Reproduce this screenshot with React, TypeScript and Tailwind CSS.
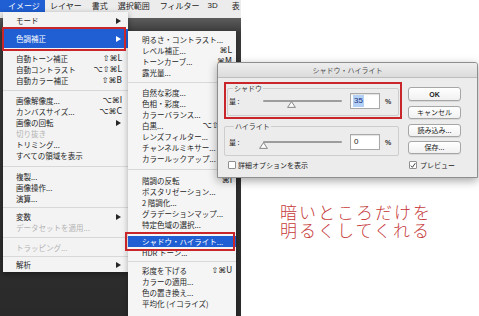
import React from "react";

type R = {
  t?: "sp" | "sep";
  c?: string;
  label?: string;
  sc?: string;
  arrow?: boolean;
  disabled?: boolean;
  active?: boolean;
};

const mainMenu: R[] = [
  { t: "sp", c: "h-[3px]" },
  { label: "モード", arrow: true },
  { t: "sp", c: "h-[3px]" },
  { label: "色調補正", arrow: true, active: true, c: "h-[19px]" },
  { t: "sp", c: "h-[5px]" },
  { label: "自動トーン補正", sc: "⇧⌘L" },
  { label: "自動コントラスト", sc: "⌥⇧⌘L" },
  { label: "自動カラー補正", sc: "⇧⌘B" },
  { t: "sep", c: "h-[9px]" },
  { label: "画像解像度...", sc: "⌥⌘I" },
  { label: "カンバスサイズ...", sc: "⌥⌘C" },
  { label: "画像の回転", arrow: true },
  { label: "切り抜き", disabled: true },
  { label: "トリミング..." },
  { label: "すべての領域を表示" },
  { t: "sep", c: "h-[10px]" },
  { label: "複製..." },
  { label: "画像操作..." },
  { label: "演算..." },
  { t: "sep", c: "h-[7px]" },
  { label: "変数", arrow: true },
  { label: "データセットを適用...", disabled: true },
  { t: "sep", c: "h-[9px]" },
  { label: "トラッピング...", disabled: true },
  { t: "sep", c: "h-[6px]" },
  { label: "解析", arrow: true },
];

const subMenu: R[] = [
  { t: "sp", c: "h-[3px]" },
  { label: "明るさ・コントラスト..." },
  { label: "レベル補正...", sc: "⌘L" },
  { label: "トーンカーブ...", sc: "⌘M" },
  { label: "露光量..." },
  { t: "sep", c: "h-[9px]" },
  { label: "自然な彩度..." },
  { label: "色相・彩度...", sc: "⌘U" },
  { label: "カラーバランス...", sc: "⌘B" },
  { label: "白黒...", sc: "⌥⇧⌘B" },
  { label: "レンズフィルター..." },
  { label: "チャンネルミキサー..." },
  { label: "カラールックアップ..." },
  { t: "sep", c: "h-[11px]" },
  { label: "階調の反転", sc: "⌘I" },
  { label: "ポスタリゼーション..." },
  { label: "2 階調化..." },
  { label: "グラデーションマップ..." },
  { label: "特定色域の選択..." },
  { t: "sep", c: "h-[6px]" },
  { label: "シャドウ・ハイライト...", active: true },
  { label: "HDR トーン..." },
  { t: "sep", c: "h-[7px]" },
  { label: "彩度を下げる", sc: "⇧⌘U" },
  { label: "カラーの適用..." },
  { label: "色の置き換え..." },
  { label: "平均化 (イコライズ)" },
];

function Arrow() {
  return (
    <svg width="5" height="6" viewBox="0 0 5 6" className="mr-[1px]">
      <path d="M0 0 L5 3 L0 6 Z" fill="currentColor" />
    </svg>
  );
}

function Row({ r, side }: { r: R; side: "main" | "sub" }) {
  if (r.t === "sp") return <div className={r.c} />;
  if (r.t === "sep")
    return (
      <div className={`${r.c} flex items-center`}>
        <div className="h-px w-full bg-[#d8d8d8]" />
      </div>
    );
  return (
    <div
      className={`${r.c ?? "h-[11px]"} flex items-center ${
        side === "main" ? "pl-[13px] pr-[6px]" : "pl-[14px] pr-[4px]"
      } ${
        r.active
          ? "bg-[#1f5fd3] text-white"
          : r.disabled
          ? "text-[#b4b4b4]"
          : "text-[#262626]"
      }`}
    >
      <span className="flex-1 whitespace-nowrap">{r.label}</span>
      {r.sc && (
        <span className="whitespace-nowrap font-['DejaVu_Sans','Noto_Sans_CJK_JP',sans-serif] text-[8px]">
          {r.sc}
        </span>
      )}
      {r.arrow && <Arrow />}
    </div>
  );
}

function Thumb() {
  return (
    <svg width="9" height="7" viewBox="0 0 9 7">
      <path d="M4.5 0.6 L8.4 6.4 L0.6 6.4 Z" fill="#fbfbfb" stroke="#7a7a7a" strokeWidth="0.9" />
    </svg>
  );
}

function SliderRow({ pos, value, selected }: { pos: string; value: string; selected?: boolean }) {
  return (
    <div className="flex items-center">
      <span className="w-[34px] text-[7px] text-[#222]">量 :</span>
      <div className="relative h-[2px] w-[79px] rounded-full bg-[#9d9d9d]">
        <div className={`absolute top-[1px] ${pos}`}>
          <Thumb />
        </div>
      </div>
      <div className="ml-[8px] flex h-[16px] w-[30px] items-center border border-[#a9a9a9] bg-white pl-[2px] shadow-[inset_0_1px_1px_rgba(0,0,0,0.12)]">
        <span
          className={`px-[1px] text-[8px] leading-[12px] ${
            selected ? "bg-[#b3d0f6] text-[#1c2e7a]" : "text-[#222]"
          } font-['Liberation_Sans',sans-serif]`}
        >
          {value}
        </span>
      </div>
      <span className="ml-[5px] text-[7px] font-bold text-[#333] font-['Liberation_Sans',sans-serif]">%</span>
    </div>
  );
}

function Button({ label, cls }: { label: string; cls: string }) {
  return (
    <div
      className={`${cls} flex w-[53px] items-center justify-center rounded-[3px] border border-[#a6a6a6] bg-gradient-to-b from-[#ffffff] to-[#f1f1f1] text-[7px] text-[#222] shadow-[0_1px_0_rgba(0,0,0,0.08)]`}
    >
      {label}
    </div>
  );
}

export default function App() {
  return (
    <div className="relative h-[316px] w-[479px] overflow-hidden bg-white font-['Noto_Sans_CJK_JP','DejaVu_Sans',sans-serif] leading-none">
      {/* screenshot backdrop */}
      <div className="flex h-[316px] w-[241px] flex-col bg-[#2e2e2e]">
        <div className="flex h-[18px] items-start bg-[#ececec] text-[8px] text-[#1e1e1e]">
          <div className="flex h-[12px] w-[45px] items-center bg-[#1f5fd3] pl-[8px] text-white">イメージ</div>
          <div className="ml-[5px] flex h-[12px] items-center">レイヤー</div>
          <div className="ml-[10px] flex h-[12px] items-center">書式</div>
          <div className="ml-[10px] flex h-[12px] items-center">選択範囲</div>
          <div className="ml-[10px] flex h-[12px] items-center">フィルター</div>
          <div className="ml-[8px] flex h-[12px] items-center font-['Liberation_Sans',sans-serif]">3D</div>
          <div className="ml-[14px] flex h-[12px] items-center">表</div>
        </div>
        <div className="h-[14px] bg-gradient-to-b from-[#5c5c5c] to-[#3d3d3d]" />
        <div className="flex-1 bg-gradient-to-b from-[#3a3a3a] to-[#2a2a2a]" />
      </div>

      {/* image menu */}
      <div className="absolute left-[3px] top-[12px] flex h-[260px] w-[125px] flex-col bg-[#f3f3f3] text-[7.5px] shadow-[0_2px_6px_rgba(0,0,0,0.4)]">
        {mainMenu.map((r, i) => (
          <Row key={i} r={r} side="main" />
        ))}
      </div>

      {/* adjustments submenu */}
      <div className="absolute left-[128px] top-[31px] flex h-[300px] w-[108px] flex-col bg-[#f5f5f5] text-[7.5px] shadow-[0_2px_6px_rgba(0,0,0,0.3)]">
        {subMenu.map((r, i) => (
          <Row key={i} r={r} side="sub" />
        ))}
      </div>

      {/* red highlight boxes */}
      <div className="absolute left-[2px] top-[27px] h-[24px] w-[124px] border-2 border-[#c9262c]" />
      <div className="absolute left-[125px] top-[232px] h-[19px] w-[110px] border-2 border-[#c9262c]" />

      {/* dialog */}
      <div className="absolute left-[217px] top-[62px] flex h-[116px] w-[261px] flex-col overflow-hidden rounded-t-[3px] border border-[#8e8e8e] bg-[#ececec] shadow-[0_3px_10px_rgba(0,0,0,0.35)]">
        <div className="flex h-[15px] shrink-0 items-center justify-center border-b border-[#bdbdbd] bg-gradient-to-b from-[#eeeeee] to-[#dcdcdc] text-[7px] text-[#4a4a4a]">
          シャドウ・ハイライト
        </div>
        <div className="flex">
          <div className="ml-[6px] flex w-[178px] flex-col">
            <div className="mt-[4px] h-[37px] border-2 border-[#c9262c]">
              <div className="relative mx-[1px] mt-[4px] h-[28px] border border-[#cdcdcd] rounded-[2px] pl-[1px] pt-[4px]">
                <span className="absolute left-[5px] top-[-4px] bg-[#ececec] px-[1px] text-[7px] text-[#333]">シャドウ</span>
                <SliderRow pos="left-[24px]" value="35" selected />
              </div>
            </div>
            <div className="relative mt-[7px] h-[30px] w-[175px] rounded-[2px] border border-[#cdcdcd] pl-[4px] pt-[7px]">
              <span className="absolute left-[9px] top-[-4px] bg-[#ececec] px-[1px] text-[7px] text-[#333]">ハイライト</span>
              <SliderRow pos="left-[-4px]" value="0" />
            </div>
            <div className="ml-[4px] mt-[5px] flex items-center">
              <div className="h-[8px] w-[8px] rounded-[1px] border border-[#8f8f8f] bg-white" />
              <span className="ml-[2px] text-[7px] text-[#222]">詳細オプションを表示</span>
            </div>
          </div>
          <div className="ml-[6px] flex flex-col">
            <Button label="OK" cls="mt-[9px] h-[14px] font-bold font-['Liberation_Sans',sans-serif] text-[7.5px]" />
            <Button label="キャンセル" cls="mt-[5px] h-[13px]" />
            <Button label="読み込み..." cls="mt-[5px] h-[13px]" />
            <Button label="保存..." cls="mt-[4px] h-[13px]" />
            <div className="ml-[1px] mt-[7px] flex items-center">
              <div className="flex h-[8px] w-[8px] items-center justify-center rounded-[1px] border border-[#8f8f8f] bg-white">
                <svg width="7" height="7" viewBox="0 0 7 7">
                  <path d="M1 3.6 L2.8 5.6 L6.2 0.8" fill="none" stroke="#222" strokeWidth="1" />
                </svg>
              </div>
              <span className="ml-[3px] text-[7px] text-[#222]">プレビュー</span>
            </div>
          </div>
        </div>
      </div>

      {/* annotation */}
      <div className="absolute left-[280px] top-[203px] text-[17px] font-light leading-[18px] tracking-[2px] text-[#c63a3a]">
        <div>暗いところだけを</div>
        <div>明るくしてくれる</div>
      </div>
    </div>
  );
}
